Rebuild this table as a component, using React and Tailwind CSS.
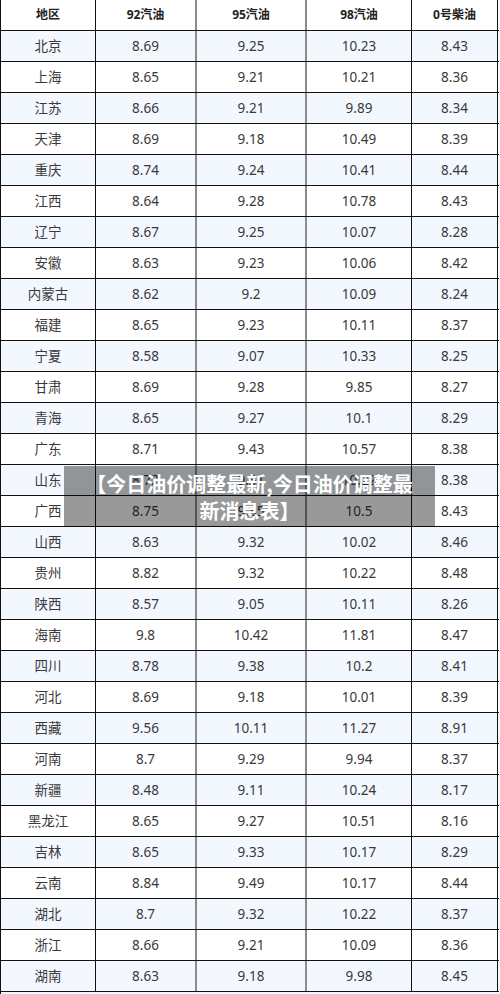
import React from "react";

const ROWS = [
  ["北京", "8.69", "9.25", "10.23", "8.43"],
  ["上海", "8.65", "9.21", "10.21", "8.36"],
  ["江苏", "8.66", "9.21", "9.89", "8.34"],
  ["天津", "8.69", "9.18", "10.49", "8.39"],
  ["重庆", "8.74", "9.24", "10.41", "8.44"],
  ["江西", "8.64", "9.28", "10.78", "8.43"],
  ["辽宁", "8.67", "9.25", "10.07", "8.28"],
  ["安徽", "8.63", "9.23", "10.06", "8.42"],
  ["内蒙古", "8.62", "9.2", "10.09", "8.24"],
  ["福建", "8.65", "9.23", "10.11", "8.37"],
  ["宁夏", "8.58", "9.07", "10.33", "8.25"],
  ["甘肃", "8.69", "9.28", "9.85", "8.27"],
  ["青海", "8.65", "9.27", "10.1", "8.29"],
  ["广东", "8.71", "9.43", "10.57", "8.38"],
  ["山东", "8.72", "9.31", "10.22", "8.38"],
  ["广西", "8.75", "9.35", "10.5", "8.43"],
  ["山西", "8.63", "9.32", "10.02", "8.46"],
  ["贵州", "8.82", "9.32", "10.22", "8.48"],
  ["陕西", "8.57", "9.05", "10.11", "8.26"],
  ["海南", "9.8", "10.42", "11.81", "8.47"],
  ["四川", "8.78", "9.38", "10.2", "8.41"],
  ["河北", "8.69", "9.18", "10.01", "8.39"],
  ["西藏", "9.56", "10.11", "11.27", "8.91"],
  ["河南", "8.7", "9.29", "9.94", "8.37"],
  ["新疆", "8.48", "9.11", "10.24", "8.17"],
  ["黑龙江", "8.65", "9.27", "10.51", "8.16"],
  ["吉林", "8.65", "9.33", "10.17", "8.29"],
  ["云南", "8.84", "9.49", "10.17", "8.44"],
  ["湖北", "8.7", "9.32", "10.22", "8.37"],
  ["浙江", "8.66", "9.21", "10.09", "8.36"],
  ["湖南", "8.63", "9.18", "9.98", "8.45"],
];

const HEAD = ["地区", "92汽油", "95汽油", "98汽油", "0号柴油"];

// per-column cell classes (widths include right border)
const COLS = [
  "w-[95px] border-r border-[#111]",
  "w-[101px] border-r-2 border-[#8c8c8c]",
  "w-[110px] border-r-2 border-[#8c8c8c]",
  "w-[105px] border-r border-[#111]",
  "w-[86px] border-r border-[#111]",
];

function Row({ cells, head, shaded }) {
  return (
    <div
      className={[
        "flex h-[31px] border-b border-[#111]",
        shaded ? "bg-[#f3f8fe]" : "bg-white",
      ].join(" ")}
    >
      {cells.map((c, i) => (
        <div
          key={i}
          className={[
            "flex items-center justify-center shrink-0 h-full",
            COLS[i],
            head ? "text-[12px] font-bold text-[#222]" : "text-[13.5px] text-[#3a3a3a]",
          ].join(" ")}
        >
          {c}
        </div>
      ))}
    </div>
  );
}

export default function App() {
  return (
    <div
      className="relative w-[500px] h-[994px] bg-white overflow-hidden"
      style={{ fontFamily: '"Noto Sans", "Noto Sans CJK SC", sans-serif' }}
    >
      <div className="w-[499px] border-l border-[#111]">
        <Row cells={HEAD} head />
        {ROWS.map((r, i) => (
          <Row key={r[0]} cells={r} shaded={i % 2 === 0} />
        ))}
        <div className="h-[3px] border-b border-[#555] bg-[#f3f8fe]" />
      </div>

      {/* title banner over the table */}
      <div className="absolute left-[64px] top-[466px] w-[371px] h-[61px] bg-black/40 flex items-center justify-center">
        <p
          className="text-white font-bold text-[20px] leading-[27px] text-center px-[18px]"
          style={{ fontFamily: '"Noto Sans CJK SC", sans-serif' }}
        >
          【今日油价调整最新,今日油价调整最新消息表】
        </p>
      </div>
    </div>
  );
}
